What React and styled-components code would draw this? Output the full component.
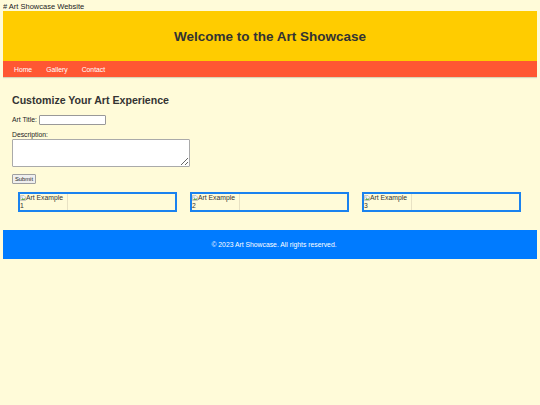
import React from 'react';
import styled, { createGlobalStyle } from 'styled-components';

const GlobalStyle = createGlobalStyle`
  body {
    margin: 3px;
    background-color: #fffbd9;
    font-family: 'Liberation Sans', Arial, sans-serif;
    font-size: 6.8px;
    color: #333;
  }
`;

const arts = ['Art Example 1', 'Art Example 2', 'Art Example 3'];

const BrokenIcon = () => (
  <svg width="6" height="6" viewBox="0 0 12 12">
    <path d="M1 1h7l3 3v7H1z" fill="#f4f4f4" stroke="#9a9a9a" strokeWidth="1" />
    <path d="M2 10l3-4 2 2 2-2 1 4z" fill="#6aa84f" />
    <circle cx="4" cy="4" r="1.2" fill="#4a90d9" />
  </svg>
);

const App = () => {
  return (
    <>
      <GlobalStyle />
      <Preface># Art Showcase Website</Preface>
      <Header>
        <Title>Welcome to the Art Showcase</Title>
      </Header>
      <Nav>
        <NavLink href="#">Home</NavLink>
        <NavLink href="#">Gallery</NavLink>
        <NavLink href="#">Contact</NavLink>
      </Nav>
      <Main>
        <Heading>Customize Your Art Experience</Heading>
        <Form>
          <Row>
            <Label>Art Title:</Label>
            <TitleInput type="text" />
          </Row>
          <Label>Description:</Label>
          <TextArea />
          <Submit type="button">Submit</Submit>
        </Form>
      </Main>
      <Gallery>
        {arts.map((alt) => (
          <ArtItem key={alt}>
            <Broken>
              <BrokenIcon />
              {alt}
            </Broken>
          </ArtItem>
        ))}
      </Gallery>
      <Footer>© 2023 Art Showcase. All rights reserved.</Footer>
    </>
  );
};

export default App;

const Preface = styled.div`
  height: 8px;
  line-height: 8px;
  font-size: 7.5px;
  color: #222;
`;

const Header = styled.header`
  height: 50px;
  display: flex;
  align-items: center;
  justify-content: center;
  background-color: #ffcc00;
`;

const Title = styled.h1`
  margin: 0;
  font-size: 13.5px;
  font-weight: bold;
  color: #333;
`;

const Nav = styled.nav`
  height: 16px;
  display: flex;
  align-items: center;
  gap: 14px;
  padding-left: 11px;
  background-color: #ff5733;
  box-shadow: 0 1px 1px rgba(0, 0, 0, 0.15);
`;

const NavLink = styled.a`
  color: #fff;
  text-decoration: none;
  font-size: 6.8px;
`;

const Main = styled.main`
  padding: 17px 9px 0;
`;

const Heading = styled.h2`
  margin: 0 0 9px;
  font-size: 10.6px;
  font-weight: bold;
  color: #333;
`;

const Form = styled.form`
  display: flex;
  flex-direction: column;
  align-items: flex-start;
`;

const Row = styled.div`
  display: flex;
  align-items: center;
  gap: 2px;
  margin-bottom: 6px;
`;

const Label = styled.label`
  font-size: 6.8px;
  line-height: 8px;
  color: #222;
`;

const TitleInput = styled.input`
  box-sizing: border-box;
  width: 67px;
  height: 10px;
  padding: 0;
  border: 1px solid #999;
  border-radius: 1px;
  background: #fff;
`;

const TextArea = styled.textarea`
  box-sizing: border-box;
  width: 178px;
  height: 28px;
  margin: 0 0 7px;
  padding: 0;
  border: 1px solid #aaa;
  border-radius: 1px;
  background: #fff;
  resize: both;
`;

const Submit = styled.button`
  box-sizing: border-box;
  width: 24px;
  height: 10px;
  padding: 0;
  font-family: 'Liberation Sans', Arial, sans-serif;
  font-size: 5.8px;
  line-height: 7px;
  color: #222;
  background: #efefef;
  border: 1px solid #a0a0a0;
  border-radius: 1px;
`;

const Gallery = styled.section`
  display: flex;
  gap: 13px;
  padding: 8px 16px 0 15px;
  margin-bottom: 18px;
`;

const ArtItem = styled.div`
  flex: 1;
  box-sizing: border-box;
  height: 20px;
  border: 2px solid #1a82ef;
  background: #fffbd9;
  display: flex;
`;

const Broken = styled.span`
  width: 47px;
  font-size: 6.8px;
  line-height: 7.5px;
  color: #333;
  border-right: 1px solid #e8e2c4;
  svg {
    vertical-align: top;
    margin-top: 1px;
  }
`;

const Footer = styled.footer`
  margin-right: -3px;
  padding-left: 5px;
  height: 29px;
  display: flex;
  align-items: center;
  justify-content: center;
  background-color: #007bff;
  color: #fff;
  font-size: 6.8px;
`;
